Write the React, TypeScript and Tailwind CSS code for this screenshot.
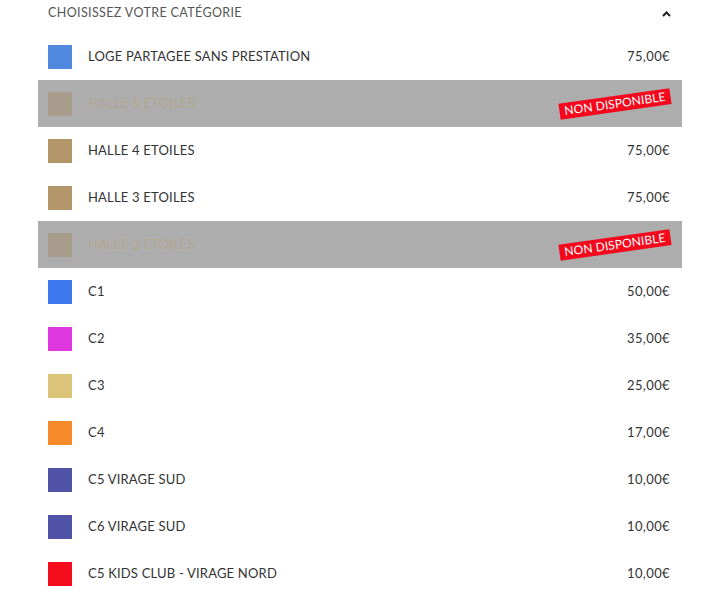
type Categorie = {
  nom: string;
  couleur: string;
  prix: string;
  indisponible?: boolean;
};

const categories: Categorie[] = [
  { nom: "LOGE PARTAGEE SANS PRESTATION", couleur: "bg-[#4f88dc]", prix: "75,00€" },
  { nom: "HALLE 5 ETOILES", couleur: "bg-[#a89d8c]", prix: "", indisponible: true },
  { nom: "HALLE 4 ETOILES", couleur: "bg-[#b3976a]", prix: "75,00€" },
  { nom: "HALLE 3 ETOILES", couleur: "bg-[#b3976a]", prix: "75,00€" },
  { nom: "HALLE 2 ETOILES", couleur: "bg-[#a89d8c]", prix: "", indisponible: true },
  { nom: "C1", couleur: "bg-[#3e78ef]", prix: "50,00€" },
  { nom: "C2", couleur: "bg-[#df37df]", prix: "35,00€" },
  { nom: "C3", couleur: "bg-[#dbc47a]", prix: "25,00€" },
  { nom: "C4", couleur: "bg-[#f68a2a]", prix: "17,00€" },
  { nom: "C5 VIRAGE SUD", couleur: "bg-[#5153a8]", prix: "10,00€" },
  { nom: "C6 VIRAGE SUD", couleur: "bg-[#5153a8]", prix: "10,00€" },
  { nom: "C5 KIDS CLUB - VIRAGE NORD", couleur: "bg-[#f50d1e]", prix: "10,00€" },
];

export default function App() {
  return (
    <div className="min-h-[606px] w-[714px] bg-white font-['Lato',sans-serif]">
      <div className="mx-[38px] w-[644px]">
        <div className="flex h-[33px] items-center justify-between pl-[10px] pr-[11px] pb-[7px]">
          <span className="text-[12.5px] tracking-[0.03em] text-[#555]">CHOISISSEZ VOTRE CATÉGORIE</span>
          <svg width="9" height="6" viewBox="0 0 9 6" className="mt-[1px]">
            <path d="M1 5 L4.5 1.5 L8 5" fill="none" stroke="#222" strokeWidth="2" />
          </svg>
        </div>

        {categories.map((c) => (
          <div
            key={c.nom}
            className={`relative flex h-[47px] items-center pl-[10px] pr-[12px] ${
              c.indisponible ? "bg-[#adadad]" : "bg-white"
            }`}
          >
            <div className={`h-[24px] w-[24px] shrink-0 ${c.couleur}`} />
            <span
              className={`ml-[16px] flex-1 text-[13px] tracking-[0.015em] ${
                c.indisponible ? "text-[#b3a88f]" : "text-[#333]"
              }`}
            >
              {c.nom}
            </span>
            {c.indisponible ? (
              <span className="mr-[-1px] -rotate-[8deg] bg-[#f5081c] px-[5px] py-[1px] text-[12px] leading-[14px] tracking-[0.01em] text-white">
                NON DISPONIBLE
              </span>
            ) : (
              <span className="text-[13px] tracking-[0.03em] text-[#333]">{c.prix}</span>
            )}
          </div>
        ))}
      </div>
    </div>
  );
}
